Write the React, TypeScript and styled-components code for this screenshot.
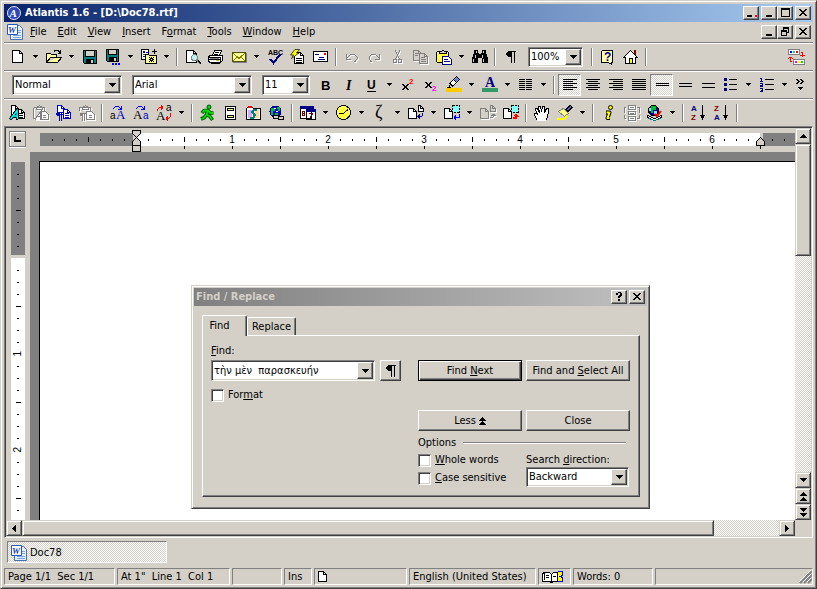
import React from 'react';
import styled, { createGlobalStyle, css } from 'styled-components';

const FACE = '#d4d0c8';
const SHADOW = '#808080';
const DARK = '#404040';
const NAVY = '#000080';

const raised = css`
  border: 1px solid;
  border-color: #fff ${DARK} ${DARK} #fff;
  box-shadow: inset -1px -1px 0 ${SHADOW};
`;
const sunken = css`
  border: 1px solid;
  border-color: ${SHADOW} #fff #fff ${SHADOW};
  box-shadow: inset 1px 1px 0 ${DARK}, inset -1px -1px 0 ${FACE};
`;
const dither = css`
  background: repeating-conic-gradient(#fff 0 25%, ${FACE} 0 50%) 0 0 / 2px 2px;
`;

const GlobalStyle = createGlobalStyle`
  * { box-sizing: border-box; }
  body { margin: 0; background: ${FACE}; }
  body, button, input, select {
    font-family: "DejaVu Sans Condensed", "Noto Sans", sans-serif;
    font-size: 11px;
    line-height: 14px;
    color: #000;
  }
  button, input, select { margin: 0; padding: 0; border-radius: 0; }
  svg { display: block; flex: none; overflow: visible; }
`;

const Frame = styled.div`
  display: flex;
  flex-direction: column;
  height: 100vh;
  min-height: 520px;
  padding: 2px;
  background: ${FACE};
  border: 1px solid;
  border-color: ${FACE} ${DARK} ${DARK} ${FACE};
  box-shadow: inset 1px 1px 0 #fff, inset -1px -1px 0 ${SHADOW};
`;
const FrameInner = styled.div`
  display: flex;
  flex: 1;
  flex-direction: column;
  padding: 1px;
  min-width: 0;
  min-height: 0;
`;
const TitleBar = styled.header`
  display: flex;
  flex: none;
  align-items: center;
  height: 18px;
  padding: 0 2px 0 3px;
  gap: 4px;
  background: linear-gradient(to right, #0a246a, #a6caf0);
`;
const Title = styled.h1`
  flex: 1;
  margin: 0;
  font-size: 11px;
  line-height: 16px;
  font-weight: bold;
  color: #fff;
  white-space: nowrap;
`;
const CaptionButtons = styled.div`
  display: flex;
  margin-left: auto;
`;
const CaptionButton = styled.button<{ $gap?: boolean }>`
  width: 16px;
  height: 14px;
  margin-left: ${p => (p.$gap ? 2 : 0)}px;
  background: ${FACE};
  ${raised}
`;
const MenuBar = styled.nav`
  display: flex;
  flex: none;
  align-items: center;
  height: 20px;
  padding: 0 2px 0 3px;
`;
const MenuItems = styled.div`
  display: flex;
  padding-left: 2px;
`;
const MenuItem = styled.button`
  padding: 0 6px 0 5px;
  border: 0;
  background: none;
  height: 18px;
`;
const Toolbar = styled.div`
  display: flex;
  flex: none;
  align-items: center;
  height: 28px;
  padding: 0 8px 0 2px;
  border-top: 1px solid ${SHADOW};
  box-shadow: inset 0 1px 0 #fff;
  overflow: hidden;
`;
const ToolButton = styled.button<{ $pressed?: boolean; $off?: boolean }>`
  display: flex;
  flex: none;
  align-items: center;
  width: 23px;
  height: 22px;
  padding-left: 2px;
  border: 1px solid transparent;
  background: none;
  ${p => p.$pressed && css`${dither} border-color: ${SHADOW} #fff #fff ${SHADOW};`}
  ${p => p.$off && css`svg { filter: drop-shadow(1px 1px 0 #fff); }`}
`;
const MoreButton = styled.button`
  display: flex;
  flex: none;
  align-items: center;
  justify-content: center;
  width: 13px;
  height: 22px;
  border: 0;
  background: none;
`;
const Separator = styled.div`
  flex: none;
  width: 2px;
  height: 18px;
  margin: 0 3px;
  background: linear-gradient(to right, ${SHADOW} 50%, #fff 50%);
`;
const Spacer = styled.div`
  flex: 1;
`;
const ComboBox = styled.div<{ $w: number; $ml?: number; $mr?: number }>`
  display: flex;
  flex: none;
  width: ${p => p.$w}px;
  height: 20px;
  margin-left: ${p => p.$ml ?? 0}px;
  margin-right: ${p => p.$mr ?? 0}px;
  padding: 1px;
  background: #fff;
  ${sunken}
`;
const comboField = css`
  flex: 1;
  min-width: 0;
  padding-left: 1px;
  border: 0;
  outline: 0;
  background: transparent;
`;
const Select = styled.select`
  appearance: none;
  ${comboField}
`;
const TextInput = styled.input`
  ${comboField}
`;
const ComboArrow = styled.span`
  display: flex;
  flex: none;
  align-items: center;
  justify-content: center;
  width: 16px;
  background: ${FACE};
  pointer-events: none;
  ${raised}
`;

/* Document area */
const Workspace = styled.main`
  position: relative;
  display: grid;
  flex: 1;
  grid-template-columns: minmax(0, 1fr) 16px;
  grid-template-rows: minmax(0, 1fr) 16px;
  min-height: 0;
  padding: 1px;
  ${sunken}
`;
const Editor = styled.div`
  display: grid;
  grid-template-columns: 24px minmax(0, 1fr);
  grid-template-rows: 24px minmax(0, 1fr);
  min-width: 0;
  min-height: 0;
  overflow: hidden;
`;
const TabStopButton = styled.button`
  display: flex;
  align-items: center;
  justify-content: center;
  width: 17px;
  height: 16px;
  margin: 3px 0 0 3px;
  background: ${FACE};
  border: 1px solid ${SHADOW};
  box-shadow: inset 1px 1px 0 #fff, 0 1px 0 #fff;
`;
const RulerTrack = styled.div`
  position: relative;
  display: flex;
  height: 19px;
  margin: 5px 0 0 10px;
  min-width: 0;
`;
const HSegment = styled.div<{ $margin?: boolean; $w?: number }>`
  display: flex;
  flex: ${p => (p.$w ? 'none' : '1')};
  width: ${p => (p.$w ? p.$w + 'px' : 'auto')};
  height: 13px;
  padding-left: 6px;
  background: ${p => (p.$margin ? SHADOW : '#fff')};
  margin-right: 3px;
  min-width: 0;
  &:nth-child(3) { margin-right: 0; padding-left: 3px; overflow: hidden; }
`;
const HMark = styled.span<{ $long?: boolean; $below?: boolean }>`
  position: relative;
  display: flex;
  flex: none;
  align-items: center;
  justify-content: center;
  width: 12px;
  height: 13px;
  font-family: "Liberation Sans", sans-serif;
  font-size: 10px;
  line-height: 13px;
  &::before {
    content: '';
    display: ${p => (p.children ? 'none' : 'block')};
    width: 1px;
    height: ${p => (p.$long ? 5 : 2)}px;
    background: #000;
  }
  &::after {
    content: '';
    display: ${p => (p.$below ? 'block' : 'none')};
    position: absolute;
    top: 13px;
    left: 6px;
    width: 1px;
    height: 3px;
    background: #000;
  }
`;
const Marker = styled.div<{ $x: number; $y: number }>`
  position: absolute;
  left: ${p => p.$x}px;
  top: ${p => p.$y}px;
`;
const VRuler = styled.div`
  display: flex;
  flex-direction: column;
  gap: 3px;
  margin: 10px 4px 0 5px;
  min-height: 0;
  overflow: hidden;
`;
const VSegment = styled.div<{ $margin?: boolean }>`
  display: flex;
  flex: ${p => (p.$margin ? 'none' : '1')};
  flex-direction: column;
  width: 14px;
  height: ${p => (p.$margin ? 93 : 0)}px;
  padding-top: 6px;
  overflow: hidden;
  background: ${p => (p.$margin ? SHADOW : '#fff')};
`;
const VMark = styled.span<{ $long?: boolean }>`
  display: flex;
  flex: none;
  align-items: center;
  justify-content: center;
  width: 14px;
  height: 12px;
  font-family: "Liberation Sans", sans-serif;
  font-size: 10px;
  line-height: 12px;
  writing-mode: sideways-lr;
  &::before {
    content: '';
    display: ${p => (p.children ? 'none' : 'block')};
    width: ${p => (p.$long ? 5 : 2)}px;
    height: 1px;
    background: #000;
  }
`;
const Desk = styled.div`
  min-width: 0;
  padding: 9px 0 0 9px;
  background: ${SHADOW};
`;
const Paper = styled.div`
  height: 100%;
  background: #fff;
  border: solid #000;
  border-width: 1px 0 0 1px;
`;
const ScrollBar = styled.div<{ $row?: boolean }>`
  display: flex;
  flex-direction: ${p => (p.$row ? 'row' : 'column')};
  min-height: 0;
  ${dither}
`;
const ScrollButton = styled.button`
  display: flex;
  flex: none;
  align-items: center;
  justify-content: center;
  width: 16px;
  height: 16px;
  background: ${FACE};
  border: 1px solid;
  border-color: ${FACE} ${DARK} ${DARK} ${FACE};
  box-shadow: inset 1px 1px 0 #fff, inset -1px -1px 0 ${SHADOW};
`;
const ScrollTrack = styled.div`
  flex: 1;
  min-height: 0;
`;
const Thumb = styled.div<{ $row?: boolean }>`
  width: ${p => (p.$row ? '91.4%' : '16px')};
  height: ${p => (p.$row ? '16px' : '34%')};
  background: ${FACE};
  border: 1px solid;
  border-color: ${FACE} ${DARK} ${DARK} ${FACE};
  box-shadow: inset 1px 1px 0 #fff, inset -1px -1px 0 ${SHADOW};
`;

/* Find / Replace dialog */
const Dialog = styled.section`
  position: absolute;
  left: 186px;
  top: 158px;
  width: 459px;
  padding: 2px;
  background: ${FACE};
  border: 1px solid;
  border-color: ${FACE} ${DARK} ${DARK} ${FACE};
  box-shadow: inset 1px 1px 0 #fff, inset -1px -1px 0 ${SHADOW};
`;
const DialogTitle = styled.div`
  display: flex;
  align-items: center;
  height: 18px;
  padding: 0 2px;
  background: linear-gradient(to right, #808080, #c0c0c0);
  color: ${FACE};
  font-weight: bold;
`;
const DialogBody = styled.div`
  padding: 9px 7px 9px 8px;
`;
const Tabs = styled.div`
  display: flex;
  align-items: flex-end;
  height: 20px;
`;
const Tab = styled.button<{ $active?: boolean }>`
  position: relative;
  z-index: ${p => (p.$active ? 1 : 0)};
  height: ${p => (p.$active ? 21 : 18)}px;
  width: ${p => (p.$active ? 45 : 49)}px;
  margin-bottom: ${p => (p.$active ? -1 : 0)}px;
  padding-right: ${p => (p.$active ? 10 : 0)}px;
  background: ${FACE};
  border: 1px solid;
  border-color: #fff ${DARK} transparent #fff;
  border-bottom: 0;
  border-radius: 2px 2px 0 0;
  box-shadow: inset -1px 0 0 ${SHADOW};
  white-space: nowrap;
`;
const Panel = styled.div`
  display: flex;
  justify-content: space-between;
  height: 162px;
  padding: 8px 9px 8px 8px;
  ${raised}
`;
const LeftColumn = styled.div`
  display: flex;
  flex-direction: column;
  align-items: flex-start;
`;
const InputRow = styled.div`
  display: flex;
  gap: 5px;
  margin: 2px 0 7px;
  > div { height: 21px; }
`;
const SquareButton = styled.button`
  display: flex;
  align-items: center;
  justify-content: center;
  width: 21px;
  height: 21px;
  background: ${FACE};
  ${raised}
`;
const CheckLabel = styled.label`
  display: flex;
  align-items: center;
  gap: 4px;
  height: 14px;
  white-space: nowrap;
`;
const CheckBox = styled.input`
  appearance: none;
  width: 13px;
  height: 13px;
  margin: 0;
  background: #fff;
  ${sunken}
`;
const RightColumn = styled.div`
  display: grid;
  grid-template-columns: 104px 104px;
  grid-template-rows: 22px 28px 22px 21px auto;
  align-content: start;
  column-gap: 4px;
  padding-top: 16px;
`;
const PushButton = styled.button<{ $default?: boolean }>`
  display: flex;
  align-items: center;
  justify-content: center;
  gap: 3px;
  height: 21px;
  background: ${FACE};
  white-space: nowrap;
  ${raised}
  ${p => p.$default && css`
    border-color: #000;
    box-shadow: inset 1px 1px 0 #fff, inset -1px -1px 0 ${DARK}, inset -2px -2px 0 ${SHADOW};
  `}
`;
const ButtonGap = styled.div`
  grid-column: 1 / 3;
`;
const OptionsHeading = styled.div`
  display: flex;
  grid-column: 1 / 3;
  align-items: center;
  gap: 7px;
  padding-right: 4px;
  &::after {
    content: '';
    flex: 1;
    height: 2px;
    background: linear-gradient(${SHADOW} 50%, #fff 50%);
  }
`;
const CheckStack = styled.div`
  display: flex;
  flex-direction: column;
  gap: 4px;
`;
const Direction = styled.div`
  white-space: nowrap;
`;

/* Bottom strips */
const DocTabs = styled.div`
  display: flex;
  flex: none;
  height: 30px;
  padding: 3px 3px 5px;
`;
const DocTab = styled.button`
  display: flex;
  align-items: center;
  gap: 3px;
  width: 160px;
  padding: 1px 0 0 3px;
  border: 1px solid;
  border-color: ${SHADOW} #fff #fff ${SHADOW};
  ${dither}
`;
const StatusBar = styled.footer`
  display: flex;
  flex: none;
  gap: 2px;
  height: 17px;
`;
const Pane = styled.div<{ $w?: number }>`
  display: flex;
  flex: ${p => (p.$w ? 'none' : '1')};
  align-items: center;
  width: ${p => (p.$w ? p.$w + 'px' : 'auto')};
  padding-left: 3px;
  border: 1px solid;
  border-color: ${SHADOW} #fff #fff ${SHADOW};
  white-space: pre;
  overflow: hidden;
`;
const Grip = styled.div`
  display: flex;
  flex: 1;
  justify-content: flex-end;
`;

/* Glyphs */
const Glyph = ({ w = 17, h = 16, children }: { w?: number; h?: number; children: React.ReactNode }) => (
  <svg width={w} height={h} viewBox={`0 0 ${w} ${h}`} shapeRendering="crispEdges" fill="none" stroke="none" aria-hidden="true">
    {children}
  </svg>
);
const Down = () => <Glyph w={5} h={3}><path fill="#000" d="M0 0h5v1H0zM1 1h3v1H1zM2 2h1v1H2z" /></Glyph>;
const ArrowDown = () => <Glyph w={7} h={4}><path fill="#000" d="M0 0h7v1H0zM1 1h5v1H1zM2 2h3v1H2zM3 3h1v1H3z" /></Glyph>;
const ArrowUp = () => <Glyph w={7} h={4}><path fill="#000" d="M3 0h1v1H3zM2 1h3v1H2zM1 2h5v1H1zM0 3h7v1H0z" /></Glyph>;
const ArrowLeft = () => <Glyph w={4} h={7}><path fill="#000" d="M3 0h1v7H3zM2 1h1v5H2zM1 2h1v3H1zM0 3h1v1H0z" /></Glyph>;
const ArrowRight = () => <Glyph w={4} h={7}><path fill="#000" d="M0 0h1v7H0zM1 1h1v5H1zM2 2h1v3H2zM3 3h1v1H3z" /></Glyph>;
const DoubleUp = () => <Glyph w={7} h={9}><path fill="#000" d="M3 0h1v1H3zM2 1h3v1H2zM1 2h5v1H1zM0 3h7v1H0zM3 5h1v1H3zM2 6h3v1H2zM1 7h5v1H1zM0 8h7v1H0z" /></Glyph>;
const DoubleDown = () => <Glyph w={7} h={9}><path fill="#000" d="M0 0h7v1H0zM1 1h5v1H1zM2 2h3v1H2zM3 3h1v1H3zM0 5h7v1H0zM1 6h5v1H1zM2 7h3v1H2zM3 8h1v1H3z" /></Glyph>;
const LessArrow = () => <Glyph w={7} h={8}><path fill="#000" d="M3 0h1v1H3zM2 1h3v1H2zM1 2h5v1H1zM0 3h7v1H0zM3 4h1v1H3zM2 5h3v1H2zM1 6h5v1H1zM0 7h7v1H0z" /></Glyph>;

const Sheet = ({ x, y, w = 9, h = 11, s = '#000', f = '#fff' }: { x: number; y: number; w?: number; h?: number; s?: string; f?: string }) => (
  <g transform={`translate(${x} ${y})`}>
    <path fill={f} stroke={s} d={`M.5 .5H${w - 3.5}L${w - 0.5} 3.5V${h - 0.5}H.5Z`} />
    <path stroke={s} d={`M${w - 3.5} 0V3.5H${w}`} />
  </g>
);

const icons: Record<string, React.ReactNode> = {
  new: <Sheet x={3} y={1} w={11} h={13} />,
  open: <><path fill="#ffff99" stroke="#000" d="M1.5 13.5V4.5H5.5L6.5 5.5H11.5V8.5H5.5L1.5 13.5H12.5L16.5 8.5H11.5" /><path stroke="#000" d="M9 2.5L10 1.5H13L15.5 4M15.5 1V4.5H12.5" /></>,
  save: <><path fill="#008080" stroke="#000" d="M2.5 1.5H15.5V14.5H3.5L2.5 13.5Z" /><path fill={FACE} stroke="#000" d="M4.5 1.5H13.5V7.5H4.5Z" /><path fill="#000" d="M5 10h8v5H5z" /><path fill={FACE} d="M10 11h2v3h-2z" /></>,
  saveAll: <><path fill="#008080" stroke="#000" d="M2.5 .5H14.5V12.5H3.5L2.5 11.5Z" /><path fill={FACE} stroke="#000" d="M4.5 .5H12.5V5.5H4.5Z" /><path fill="#000" d="M5 8h8v5H5z" /><path fill={FACE} d="M10 9h2v3h-2zM7 13h10v3H7z" /><path fill="#00f" d="M8 14h2v2H8zM11 14h2v2h-2zM14 14h2v2h-2z" /></>,
  template: <><path fill="#fff" stroke="#000" d="M1.5 .5H8.5V10.5H1.5Z" /><path fill="#0000c0" d="M3 2h2v2H3zM6 3h2v1H6zM3 7h2v1H3z" /><path fill="green" d="M3 5h3v1H3z" /><path fill="#ffff99" stroke="#000" d="M5.5 6.5V5.5H8.5L9.5 6.5H16.5V14.5H5.5Z" /><path fill="#000" d="M11 8h1v1h-1zM11 12h1v1h-1zM9 10h1v1H9zM13 10h1v1h-1zM9 8h1v1H9zM13 8h1v1h-1zM9 12h1v1H9zM13 12h1v1h-1zM10 9h3v3h-3z" /><path fill="#ff0" d="M11 10h1v1h-1z" /><path stroke="#000" d="M14.5 0V5M12 2.5H17" /></>,
  preview: <><Sheet x={2} y={1} w={11} h={13} /><circle cx="10.5" cy="8.5" r="3" fill="#b8f4f4" stroke={SHADOW} /><path stroke={SHADOW} strokeWidth="2" d="M13 11L16.5 14.5" /><path stroke="#000" d="M14 11.5L17 14.5" /></>,
  print: <><path fill="#fff" stroke="#000" d="M5.5 6.5L7.5 1.5H14.5L12.5 6.5M8 3.5H12M7 5.5H11" /><path fill="#fff" stroke="#000" d="M1.5 7.5L3.5 6.5H15.5V11.5L13.5 13.5H2.5L1.5 11.5Z" /><path stroke="#000" d="M1 8.5H13.5V13M2 10.5H13M15.5 8V11" /><path fill="#808080" d="M3 9h9v1H3z" /><path fill="#c8b428" d="M9 11h3v1H9z" /><path stroke="#000" d="M4 14.5H13" /></>,
  mail: <><path fill="#ffff99" stroke="#505000" d="M2.5 3.5H15.5V12.5H2.5Z" /><path stroke="#808000" d="M3 4L8.5 9H9.5L15 4M3 12L6.5 8.5M15 12L11.5 8.5" /><path stroke={SHADOW} d="M3 13.5H16.5V4" /></>,
  spell: <><text x="2" y="6" fontSize="7" fontWeight="bold" fontFamily="Liberation Sans" fill="#000">ABC</text><path stroke={NAVY} strokeWidth="2" d="M4 10L7.5 14L14.5 5" /></>,
  quick: <><Sheet x={5} y={3} w={10} h={12} /><path stroke="#000" d="M7 9.5H13M7 11.5H13M7 13.5H13" /><path fill="#ff0" stroke="#000" shapeRendering="auto" strokeWidth=".7" d="M6 .5H10.5L7.5 4H10L2.5 9.5L4.5 6H1.5Z" /></>,
  envelope: <><path fill="#fff" stroke="#000" d="M1.5 2.5H15.5V12.5H1.5Z" /><path stroke={NAVY} d="M3 5.5H7M7 8.5H12M6 10.5H13" /><path fill="red" d="M12 4h2v2h-2z" /></>,
  undo: <path stroke={SHADOW} d="M3.5 5V10.5H8M3 10L7.5 5.5H11.5L14 8V10L11.5 13" />,
  redo: <path stroke={SHADOW} d="M13.5 5V10.5H9M14 10L9.5 5.5H5.5L3 8V10L5.5 13" />,
  cut: <><path stroke={SHADOW} d="M6 1L10.5 10M11 1L6.5 10" /><path stroke={SHADOW} d="M4.5 10.5H7.5V13.5H4.5ZM9.5 10.5H12.5V13.5H9.5Z" /></>,
  copy: <><Sheet x={1} y={1} w={9} h={11} s={SHADOW} f={FACE} /><Sheet x={7} y={4} w={9} h={11} s={SHADOW} f={FACE} /><path stroke={SHADOW} d="M3 4.5H6M3 6.5H6M9 8.5H13M9 10.5H14M9 12.5H14" /></>,
  paste: <><path fill="#ffff40" stroke="#000" d="M1.5 3.5L2.5 2.5H12.5L13.5 3.5V13.5H2.5L1.5 12.5Z" /><path fill={FACE} stroke="#000" d="M4.5 4.5V2.5H6.5L7.5 1.5H8.5L9.5 2.5H11.5V4.5Z" /><path fill="#fff" stroke={NAVY} d="M7.5 7.5H13.5L16.5 10.5V15.5H7.5ZM9 10.5H13M9 12.5H15" /></>,
  find: <path fill="#000" fillRule="evenodd" d="M3 1h4v3h1v1h2V4h1V1h4v4h1v3h1v6h-6V9H7v5H1V8h1V5h1zM5 2v2h1V2zM4 6v3h1V6zM2 10v3h1v-3zM12 2v2h1V2zM11 6v3h1V6zM12 10v3h1v-3z" />,
  pilcrow: <path fill="#000" d="M6 2h8v1h-1v11h-1V3h-2v11H9V8H6V7H5V6H4V4h1V3h1z" />,
  help: <><path fill="#ffffb0" stroke="#000" d="M3.5 1.5H13.5V13.5H12.5V15.5L9.5 13.5H2.5V2.5Z" /><text x="5" y="12" fontSize="12" fontWeight="bold" fontFamily="Liberation Sans" fill={NAVY}>?</text></>,
  home: <><path fill="#800000" d="M12 1h2v6h-2z" /><path fill="#fff" stroke="#000" d="M1.5 8.5L8.5 1.5L15.5 8.5H13.5V14.5H3.5V8.5Z" /><path fill="#ff0" stroke="#000" d="M7.5 14V9.5H10.5V14" /></>,
  swap: <><path fill="#fff" stroke={SHADOW} d="M.5 .5H11.5V5.5H.5ZM5.5 10.5H16.5V15.5H5.5Z" /><path fill="#00f" d="M2 2h2v2H2z" /><path fill="#0cc" d="M5 2h2v2H5z" /><path fill="red" d="M8 2h2v2H8z" /><path fill="#f0f" d="M7 12h2v2H7z" /><path fill="#ff0" d="M10 12h2v2h-2z" /><path fill="#0d0" d="M13 12h2v2h-2z" /><path fill="red" d="M13 3h2v5h-1V4h-1zM13 6h3v1h-3zM12 6h1v1h-1zM16 6h1v1h-1zM2 8h1v4h1v1H2zM1 8h3v1H1zM0 9h1v1H0zM4 9h1v1H4z" /></>,
  bold: <text x="4" y="13" fontSize="13" fontWeight="bold" fontFamily="Liberation Sans" fill="#000">B</text>,
  italic: <text x="6" y="13" fontSize="14" fontWeight="bold" fontStyle="italic" fontFamily="Liberation Serif" fill="#000">I</text>,
  underline: <><text x="4" y="12" fontSize="12" fontWeight="bold" fontFamily="Liberation Sans" fill="#000">U</text><path stroke="#000" d="M4 14.5H13" /></>,
  sup: <><path fill="#000" d="M3 7h2v1h1v1h1V8h1V7h2v1H9v1H8v2h1v1h1v1H8v-1H7v-1H6v1H5v1H3v-1h1v-1h1V9H4V8H3z" /><text x="10" y="7" fontSize="8" fontWeight="bold" fontFamily="Liberation Sans" fill="red">2</text></>,
  sub: <><path fill="#000" d="M3 5h2v1h1v1h1V6h1V5h2v1H9v1H8v2h1v1h1v1H8v-1H7V9H6v1H5v1H3v-1h1V9h1V7H4V6H3z" /><text x="10" y="14" fontSize="8" fontWeight="bold" fontFamily="Liberation Sans" fill="#f0f">2</text></>,
  highlight: <><path fill="#ffcc00" d="M1 11h16v4H1z" /><path stroke="#000" strokeWidth="5" d="M5.5 8.5L13 1" /><path stroke="#fff" strokeWidth="3" d="M6.5 7.5L9.5 4.5" /><path stroke="#668ad0" strokeWidth="3" d="M10 4L12.5 1.5" /><path stroke="#000" d="M2 10.5H5L4 8" /></>,
  fontColor: <><path fill="#339966" d="M1 11h16v4H1z" /><text x="4" y="10" fontSize="14" fontWeight="bold" fontFamily="Liberation Serif" fill={NAVY}>A</text></>,
  columns: <path stroke="#000" d="M2 2.5H8M2 4.5H8M2 6.5H8M2 8.5H8M2 10.5H8M2 12.5H8M9 2.5H15M9 4.5H15M9 6.5H15M9 8.5H15M9 10.5H15M9 12.5H15" />,
  left: <path stroke="#000" d="M2 2.5H16M2 4.5H12M2 6.5H16M2 8.5H12M2 10.5H16M2 12.5H12" />,
  center: <path stroke="#000" d="M2 2.5H16M4 4.5H14M2 6.5H16M4 8.5H14M2 10.5H16M4 12.5H14" />,
  right: <path stroke="#000" d="M2 2.5H16M6 4.5H16M2 6.5H16M6 8.5H16M2 10.5H16M6 12.5H16" />,
  justify: <path stroke="#000" d="M2 2.5H16M2 4.5H16M2 6.5H16M2 8.5H16M2 10.5H16M2 12.5H16" />,
  space1: <path stroke="#000" d="M3 6.5H16M3 8.5H16" />,
  space15: <path stroke="#000" d="M3 6.5H16M3 9.5H16" />,
  space2: <path stroke="#000" d="M3 6.5H16M3 10.5H16" />,
  bullets: <><path fill={NAVY} d="M2 1h3v3H2zM2 6h3v3H2zM2 11h3v3H2z" /><path stroke="#000" d="M7 2.5H15M7 7.5H15M7 12.5H15" /></>,
  numbers: <><path stroke={NAVY} d="M2 1.5H3.5V5M2 4.5H5M2 6.5H4.5V8.5H2.5V9.5H5M2 11.5H4.5V14.5H2M3 13.5H4" /><path stroke="#000" d="M7 2.5H16M7 7.5H16M7 12.5H16" /></>,
  copyFormat: <><Sheet x={2} y={0} w={8} h={10} /><Sheet x={8} y={4} w={8} h={10} /><path stroke="#000" d="M10 8.5H14M10 10.5H14M10 12.5H14" /><path stroke="#000" strokeWidth="3" d="M1 14.5L8 5L9 14.5M4 11.5H9" /><path stroke="#0ff" strokeWidth="1.5" shapeRendering="auto" d="M1.5 14L8 5.5L8.5 14M4 11H8" /></>,
  pasteFormat: <><path stroke={SHADOW} d="M1.5 2.5H12.5V6M1.5 2.5V13.5H4M4.5 4.5V2.5L7.5 .5L10.5 2.5V4.5Z" /><path fill="#fff" stroke={SHADOW} d="M8.5 6.5H13.5L16.5 9.5V14.5H8.5ZM11 10.5H14M11 12.5H14M3 14.5L9 6V14.5M5 11.5H9" /></>,
  copyPara: <><Sheet x={2} y={0} w={8} h={10} s="#0000c0" /><Sheet x={8} y={4} w={8} h={10} s="#0000c0" /><path stroke="#0000c0" d="M10 8.5H14M10 10.5H14M10 12.5H14" /><path fill="#0000c0" d="M2 7h6v1H7v8H6V8H5v8H4v-5H2v-1H1V8h1z" /></>,
  pastePara: <><path stroke={SHADOW} d="M1.5 6V2.5H12.5V6M4.5 4.5V2.5L7.5 .5L10.5 2.5V4.5Z" /><path fill="#fff" stroke={SHADOW} d="M8.5 6.5H13.5L16.5 9.5V14.5H8.5ZM11 10.5H14M11 12.5H14" /><path fill={SHADOW} d="M2 8h6v1H7v7H6V9H5v7H4v-5H2z" /></>,
  lowerUpper: <><text x="1" y="14" fontSize="10" fontFamily="Liberation Sans" fill="#000">a</text><text x="7" y="14" fontSize="13" fontFamily="Liberation Serif" fill="#0000c0">A</text><path fill="#00f" d="M4 3h1v1H4zM5 2h1v1H5zM6 1h4v1H6zM10 2h1v1h-1zM12 1h1v4H9V4h2V3h1z" /></>,
  upperLower: <><text x="1" y="14" fontSize="13" fontFamily="Liberation Serif" fill="#000">A</text><text x="11" y="14" fontSize="10" fontFamily="Liberation Sans" fill="#0000c0">a</text><path fill="#00f" d="M4 3h1v1H4zM5 2h1v1H5zM6 1h4v1H6zM10 2h1v1h-1zM12 1h1v4H9V4h2V3h1z" /></>,
  toggleCase: <><text x="1" y="15" fontSize="13" fontFamily="Liberation Serif" fill="#000">A</text><text x="11" y="6" fontSize="10" fontFamily="Liberation Sans" fill="#000">a</text><path fill="red" d="M2 4h1v2H2zM3 3h1v1H3zM4 2h4v1H4zM6 0h1v5H6zM7 1h1v3H7zM15 8h1v4h-1zM14 12h1v1h-1zM11 13h3v1h-3zM12 11h1v5h-1zM11 12h1v3h-1z" /></>,
  run: (
    <g shapeRendering="auto" strokeLinejoin="round">
      <path stroke="#005000" strokeWidth="3.6" d="M3 8L5 5.5H9L11.5 8H14.5M9 5.5L7.5 9.5L5.5 12.5L2 14M7.5 9.5L11 11.5L13.5 15" />
      <circle cx="10" cy="2" r="2" fill="#00e000" stroke="#005000" />
      <path stroke="#00e000" strokeWidth="1.8" d="M3.5 7.5L5 5.5H9L11.5 8H14M9 5.5L7.5 9.5L5.5 12.5L2.5 14M7.5 9.5L11 11.5L13 14.5" />
    </g>
  ),
  header: <><path fill="#fff" stroke="#000" d="M3.5 1.5H13.5V14.5H3.5Z" /><path fill="#ffff80" stroke="#000" d="M5.5 3.5H11.5V5.5H5.5ZM5.5 10.5H11.5V12.5H5.5Z" /></>,
  script: <><path fill="#fff" stroke="#000" d="M1.5 14.5V3.5L3.5 1.5H6.5L8.5 3.5H15.5V14.5Z" /><path fill="red" d="M3 1h4v2H3z" /><path fill="#d8a8ff" d="M3 5h4v8H3z" /><path fill="#ffd890" d="M10 5h4v8h-4z" /><path stroke="#008080" strokeWidth="2" d="M12 5H8.5L7 7L10 10L8 13H5" /></>,
  globe: <><circle cx="7.5" cy="6.5" r="5.5" fill="#00c" stroke="#008" /><path fill="#0b3" d="M3 3h4v3H5v4H3zM9 2h3v4h-2zM7 8h3v3H7z" /><path fill="#fff" d="M6 3h2v1H6zM8 6h2v1H8z" /><path fill={FACE} stroke="#000" d="M5.5 10.5H10.5V13.5H5.5ZM10.5 11.5H15.5V14.5H10.5Z" /></>,
  calendar: <><path fill="#fff" stroke="#000" d="M1.5 2.5H12.5V13.5H1.5ZM7.5 4.5H16.5V14.5H7.5Z" /><path fill={NAVY} d="M1 1h14v3H1zM7 4h10v3H7z" /><path stroke="#800000" d="M3 6.5H6M3 8.5H6M3 10.5H6M3.5 6V11M5.5 6V11" /><path fill="#800000" d="M10 8h4v2h-1v1h-1v2h-1v-2h1v-1h1V9h-3z" /></>,
  clock: <><circle cx="8.5" cy="7.5" r="7" fill="#ffff40" stroke="#000" /><path stroke="#000" d="M8.5 8.5L13 4.5M8.5 8.5H4" /><path fill="#fff" d="M8 1h1v1H8zM3 7h1v1H3zM14 7h1v1h-1z" /></>,
  symbol: <text x="4" y="13" fontSize="18" fontFamily="Liberation Serif" fill="#000">ζ</text>,
  pageBreak: <><Sheet x={1} y={3} w={9} h={11} /><Sheet x={11} y={0} w={6} h={7} /><path fill={NAVY} d="M15 8h1v3h-1zM11 11h4v1h-4zM12 9h1v5h-1zM11 10h1v3h-1zM10 11h1v1h-1z" /></>,
  sectionBreak: <><Sheet x={1} y={3} w={9} h={11} /><path fill="#80ffff" d="M9 1h7v6H9z" /><path stroke="#000" strokeDasharray="2 1" d="M9.5 .5H16.5V7.5H9.5Z" /><path fill="#00f" d="M16 9h1v4h-6v-1h5zM12 10h1v5h-1zM11 11h1v3h-1z" /></>,
  nextPage: <><Sheet x={1} y={3} w={9} h={11} s={SHADOW} f={FACE} /><Sheet x={11} y={0} w={6} h={7} s={SHADOW} f={FACE} /><path fill={SHADOW} d="M11 12h3v1h-3zM14 9h1v3h-1zM12 10h5v1h-5zM13 9h3v1h-3z" /></>,
  nextSection: <><Sheet x={1} y={3} w={9} h={11} /><path fill="#80ffff" d="M9 1h7v6H9z" /><path stroke="#000" strokeDasharray="2 1" d="M9.5 .5H16.5V7.5H9.5Z" /><path fill="red" d="M14 9h1v1h1v1h1v1h-2v2h-4v-2h2v-1h-1v-1h1v-1h1z" /></>,
  hand: <path fill="#fff" stroke="#000" d="M4.5 15.5L1.5 10.5V8.5H3.5L4.5 9.5L2.5 4.5V3.5H4.5L6.5 7.5L5.5 2.5V1.5H7.5L8.5 6.5L9.5 1.5H11.5V7.5L13.5 3.5H15.5V6.5L13.5 15.5" />,
  brush: <><path stroke="#000" strokeWidth="4" d="M10.5 6L15.5 1" /><path stroke="#4868c8" strokeWidth="2" d="M11.5 5L15 1.5" /><path fill="#ffff80" stroke={SHADOW} d="M7.5 3.5L12.5 8.5L8.5 11.5L2.5 6.5Z" /><path stroke="#ff0" strokeWidth="2" d="M1 14H8L11 11" /></>,
  info: (
    <g shapeRendering="auto" strokeLinejoin="round">
      <path stroke="#000" strokeWidth="4" d="M6 7.5H9.5L7.5 13H10" />
      <circle cx="10.5" cy="2.5" r="2" fill="#ff0" stroke="#000" />
      <path stroke="#ff0" strokeWidth="2" d="M6.5 7.5H9.5L7.5 13H9.5" />
    </g>
  ),
  outline: <><path fill="#fff" stroke={SHADOW} d="M5.5 .5H12.5V4.5H5.5ZM5.5 6.5H12.5V9.5H5.5ZM5.5 11.5H12.5V15.5H5.5Z" /><path stroke={SHADOW} d="M3 2.5H1.5V8M14 2.5H16.5V8M3 13.5H1.5V10M14 13.5H16.5V10M7 2.5H11M7 8H11M7 13.5H11" /></>,
  books: <><path fill="#fff" stroke="#000" d="M1.5 10.5L8.5 13.5L15.5 10.5V12.5L8.5 15.5L1.5 12.5Z" /><path stroke="#008080" d="M2 13.5L8.5 15.5L15 13.5" /><circle cx="7.5" cy="5.5" r="5" fill="#0000a0" stroke="#000" /><path fill="#0b3" d="M5 1h5v4H7v3H5z" /><path fill="#9df" d="M3 3h2v3H3zM8 6h3v3H8z" /><path stroke="red" strokeWidth="2" shapeRendering="auto" d="M9 9L11 11L15 6" /></>,
  sortAZ: <><text x="1" y="6" fontSize="8" fontWeight="bold" fontFamily="Liberation Sans" fill={NAVY}>A</text><text x="1" y="15" fontSize="8" fontWeight="bold" fontFamily="Liberation Sans" fill="#800000">Z</text><path stroke="#000" d="M12.5 0V14" /><path fill="#000" d="M10 10h5v1h-5zM11 11h3v2h-3zM12 13h1v2h-1z" /></>,
  sortZA: <><text x="1" y="6" fontSize="8" fontWeight="bold" fontFamily="Liberation Sans" fill="#800000">Z</text><text x="1" y="15" fontSize="8" fontWeight="bold" fontFamily="Liberation Sans" fill={NAVY}>A</text><path stroke="#000" d="M12.5 0V14" /><path fill="#000" d="M10 10h5v1h-5zM11 11h3v2h-3zM12 13h1v2h-1z" /></>,
};

const AppLogo = () => (
  <svg width="14" height="14" viewBox="0 0 14 14" aria-hidden="true">
    <circle cx="7" cy="7" r="6.5" fill="#3048b8" stroke="#dfe5ff" />
    <text x="2.5" y="11" fontSize="11" fontWeight="bold" fontStyle="italic" fontFamily="Liberation Serif" fill="#fff">A</text>
  </svg>
);
const DocLogo = () => (
  <svg width="16" height="16" viewBox="0 0 16 16" aria-hidden="true">
    <path fill="#e6efff" stroke="#4a6fae" d="M3.5 1.5H12.5L15.5 4.5V15.5H3.5Z" />
    <path stroke="#7aa0e0" d="M11 6.5H14M11 8.5H14M6 11.5H14M6 13.5H14" />
    <path fill="#fff" stroke="#2458b8" d="M.5 .5H10.5V10.5H.5Z" />
    <text x="1" y="9" fontSize="9" fontWeight="bold" fontStyle="italic" fontFamily="Liberation Serif" fill="#1845a5">W</text>
  </svg>
);
const captionPaths = {
  tray: <><path fill="#000" d="M3 8h5v2H3z" /><path fill="red" d="M11 8h2v2h-2z" /></>,
  min: <path fill="#000" d="M4 8h6v2H4z" />,
  max: <path fill="#000" fillRule="evenodd" d="M3 1h9v9H3zM4 3v6h7V3z" />,
  restore: <path fill="#000" fillRule="evenodd" d="M5 1h6v6H9v3H3V4h2zM6 3v1h3v2h1V3zM4 6v3h4V6z" />,
  close: <path fill="#000" d="M3 2h2v1h1v1h2V3h1V2h2v1h-1v1H9v1H8v1h1v1h1v1h1v1H9V8H8V7H6v1H5v1H3V8h1V7h1V6h1V5H5V4H4V3H3z" />,
  help: <path fill="#000" d="M4 2h2V1h3v1h1v3H9v1H8v1H6V5h1V4h1V2H6v2H4zM6 8h2v2H6z" />,
};
const Caption = ({ kind, label, gap }: { kind: keyof typeof captionPaths; label: string; gap?: boolean }) => (
  <CaptionButton $gap={gap} aria-label={label}><Glyph w={14} h={12}>{captionPaths[kind]}</Glyph></CaptionButton>
);

const offIcons = new Set(['undo', 'redo', 'cut', 'copy', 'pasteFormat', 'pastePara', 'nextPage', 'outline']);
/* A space-separated tool list: "v" is a drop arrow, "|" a separator, "*" marks a pressed tool. */
const Tools = ({ list }: { list: string }) => (
  <>
    {list.split(' ').map((item, i) => {
      if (item === '|') return <Separator key={i} />;
      if (item === 'v') return <MoreButton key={i} aria-label="More"><Down /></MoreButton>;
      const pressed = item.startsWith('*');
      const name = item.replace('*', '');
      return (
        <ToolButton key={i} aria-label={name} aria-pressed={pressed} $pressed={pressed} $off={offIcons.has(name)}>
          <Glyph>{icons[name]}</Glyph>
        </ToolButton>
      );
    })}
  </>
);
const Combo = ({ label, value, w, ml, mr, id }: { label: string; value: string; w: number; ml?: number; mr?: number; id?: string }) => (
  <ComboBox $w={w} $ml={ml} $mr={mr}>
    <Select id={id} aria-label={label} defaultValue={value}><option>{value}</option></Select>
    <ComboArrow><ArrowDown /></ComboArrow>
  </ComboBox>
);

const marks = (count: number) => Array.from({ length: count }, (_, i) => i + 1);

const menus = ['File', 'Edit', 'View', 'Insert', 'Format', 'Tools', 'Window', 'Help'];
const Mnemonic = ({ text, at = 0 }: { text: string; at?: number }) => (
  <span>{text.slice(0, at)}<u>{text[at]}</u>{text.slice(at + 1)}</span>
);

const FindDialog = () => (
  <Dialog role="dialog" aria-label="Find / Replace">
    <DialogTitle>
      Find / Replace
      <CaptionButtons><Caption kind="help" label="Help" /><Caption kind="close" label="Close" gap /></CaptionButtons>
    </DialogTitle>
    <DialogBody>
      <Tabs role="tablist">
        <Tab role="tab" aria-selected $active>Find</Tab>
        <Tab role="tab" aria-selected={false}>Replace</Tab>
      </Tabs>
      <Panel>
        <LeftColumn>
          <label htmlFor="find-text"><Mnemonic text="Find:" /></label>
          <InputRow>
            <ComboBox $w={164}>
              <TextInput id="find-text" defaultValue="τὴν μὲν  παρασκευήν" />
              <ComboArrow><ArrowDown /></ComboArrow>
            </ComboBox>
            <SquareButton aria-label="Special characters"><Glyph>{icons.pilcrow}</Glyph></SquareButton>
          </InputRow>
          <CheckLabel><CheckBox type="checkbox" /><Mnemonic text="Format" at={3} /></CheckLabel>
        </LeftColumn>
        <RightColumn>
          <PushButton $default><Mnemonic text="Find Next" at={5} /></PushButton>
          <PushButton><Mnemonic text="Find and Select All" at={9} /></PushButton>
          <ButtonGap />
          <PushButton>Less <LessArrow /></PushButton>
          <PushButton>Close</PushButton>
          <OptionsHeading>Options</OptionsHeading>
          <CheckStack>
            <CheckLabel><CheckBox type="checkbox" /><Mnemonic text="Whole words" /></CheckLabel>
            <CheckLabel><CheckBox type="checkbox" /><Mnemonic text="Case sensitive" /></CheckLabel>
          </CheckStack>
          <Direction>
            <label htmlFor="direction"><Mnemonic text="Search direction:" at={7} /></label>
            <Combo id="direction" label="Search direction" value="Backward" w={103} />
          </Direction>
        </RightColumn>
      </Panel>
    </DialogBody>
  </Dialog>
);

export default function App() {
  return (
    <>
      <GlobalStyle />
      <Frame>
        <FrameInner>
          <TitleBar>
            <AppLogo />
            <Title>Atlantis 1.6 - [D:\Doc78.rtf]</Title>
            <CaptionButtons>
              <Caption kind="tray" label="Minimize to tray" />
              <Caption kind="min" label="Minimize" gap />
              <Caption kind="max" label="Maximize" />
              <Caption kind="close" label="Close" gap />
            </CaptionButtons>
          </TitleBar>
          <MenuBar>
            <DocLogo />
            <MenuItems>
              {menus.map(m => <MenuItem key={m}><Mnemonic text={m} at={m === 'Format' ? 1 : 0} /></MenuItem>)}
            </MenuItems>
            <CaptionButtons>
              <Caption kind="min" label="Minimize document" />
              <Caption kind="restore" label="Restore document" />
              <Caption kind="close" label="Close document" gap />
            </CaptionButtons>
          </MenuBar>
          <Toolbar>
            <Tools list="new v open v save saveAll v template v | preview print mail v spell quick envelope | undo redo cut copy paste v find | pilcrow" />
            <Combo label="Zoom" value="100%" w={55} ml={6} mr={5} />
            <Tools list="| help home |" />
            <Spacer />
            <Glyph>{icons.swap}</Glyph>
          </Toolbar>
          <Toolbar>
            <Combo label="Style" value="Normal" w={110} ml={6} />
            <Combo label="Font" value="Arial" w={120} ml={10} />
            <Combo label="Font size" value="11" w={48} ml={10} mr={4} />
            <Tools list="bold italic underline v sup sub highlight v fontColor v columns v | *left center right justify *space1 space15 space2 bullets v numbers v" />
            <Spacer />
            <Glyph w={9} h={12}><path fill="#000" d="M0 0h2v1h1v1h1v1H3v1H2v1H0V4h1V3h1V2H1V1H0zM4 0h2v1h1v1h1v1H7v1H6v1H4V4h1V3h1V2H5V1H4zM2 8h5v1H2zM3 9h3v1H3zM4 10h1v1H4z" /></Glyph>
          </Toolbar>
          <Toolbar>
            <Tools list="copyFormat pasteFormat copyPara pastePara | lowerUpper upperLower toggleCase v | run header script globe | calendar v clock v symbol v pageBreak v sectionBreak v nextPage nextSection | hand brush v | info outline books v | sortAZ sortZA |" />
          </Toolbar>
          <Workspace>
            <Editor>
              <TabStopButton aria-label="Tab stop type"><Glyph w={7} h={6}><path fill="#000" d="M0 0h2v4h5v2H0z" /></Glyph></TabStopButton>
              <RulerTrack>
                <HSegment $margin $w={93}>{marks(7).map(n => <HMark key={n} $long={n === 4} />)}</HSegment>
                <HSegment $w={624}>
                  {marks(51).map(n => (
                    <HMark key={n} $long={n % 4 === 0} $below={n % 4 === 0}>{n % 8 === 0 ? n / 8 : null}</HMark>
                  ))}
                </HSegment>
                <HSegment $margin>{marks(60).map(n => <HMark key={n} />)}</HSegment>
                <Marker $x={92} $y={-3}>
                  <Glyph w={9} h={22}><path fill={FACE} stroke="#000" d="M.5 .5H8.5V3.5L4.5 7.5L8.5 11.5V21.5H.5V11.5L4.5 7.5L.5 3.5ZM.5 15.5H8.5" /></Glyph>
                </Marker>
                <Marker $x={716} $y={4}>
                  <Glyph w={9} h={12}><path fill={FACE} stroke="#000" d="M.5 8.5V4.5L4.5 .5L8.5 4.5V8.5ZM4.5 9V12" /></Glyph>
                </Marker>
              </RulerTrack>
              <VRuler>
                <VSegment $margin>{marks(7).map(n => <VMark key={n} $long={n === 4} />)}</VSegment>
                <VSegment>{marks(23).map(n => <VMark key={n} $long={n % 4 === 0}>{n % 8 === 0 ? n / 8 : null}</VMark>)}</VSegment>
              </VRuler>
              <Desk><Paper /></Desk>
            </Editor>
            <ScrollBar>
              <ScrollButton aria-label="Scroll up"><ArrowUp /></ScrollButton>
              <ScrollTrack><Thumb /></ScrollTrack>
              <ScrollButton aria-label="Scroll down"><ArrowDown /></ScrollButton>
              <ScrollButton aria-label="Previous page"><DoubleUp /></ScrollButton>
              <ScrollButton aria-label="Next page"><DoubleDown /></ScrollButton>
            </ScrollBar>
            <ScrollBar $row>
              <ScrollButton aria-label="Scroll left"><ArrowLeft /></ScrollButton>
              <ScrollTrack><Thumb $row /></ScrollTrack>
              <ScrollButton aria-label="Scroll right"><ArrowRight /></ScrollButton>
            </ScrollBar>
            <FindDialog />
          </Workspace>
          <DocTabs><DocTab><DocLogo />Doc78</DocTab></DocTabs>
          <StatusBar>
            <Pane $w={111}>{'Page 1/1  Sec 1/1'}</Pane>
            <Pane $w={113}>{'At 1"  Line 1  Col 1'}</Pane>
            <Pane $w={50} />
            <Pane $w={28}>Ins</Pane>
            <Pane $w={93}><Glyph w={9} h={11}><Sheet x={0} y={0} w={9} h={11} /></Glyph></Pane>
            <Pane $w={127}>English (United States)</Pane>
            <Pane $w={33}>
              <Glyph w={22} h={12}>
                <path fill="#fff" stroke="#000" d="M.5 2.5L2.5 1.5H7.5L9.5 3.5L11.5 1.5H15.5V10.5H11.5L9.5 11.5L7.5 10.5H.5ZM2.5 2V9M9.5 3V11M4 4.5H7M4 6.5H7M11 5.5H14" />
                <path fill="#ff0" stroke="#00f" d="M15.5 .5H20.5V4.5L18.5 5.5L20.5 6.5V10.5H15.5" />
              </Glyph>
            </Pane>
            <Pane $w={80}>Words: 0</Pane>
            <Pane>
              <Grip><Glyph w={13} h={13}><path stroke={SHADOW} strokeWidth="2" shapeRendering="auto" d="M1 13L13 1M5 13L13 5M9 13L13 9" /><path stroke="#fff" shapeRendering="auto" d="M0 12L12 0M4 12L12 4M8 12L12 8" /></Glyph></Grip>
            </Pane>
          </StatusBar>
        </FrameInner>
      </Frame>
    </>
  );
}
